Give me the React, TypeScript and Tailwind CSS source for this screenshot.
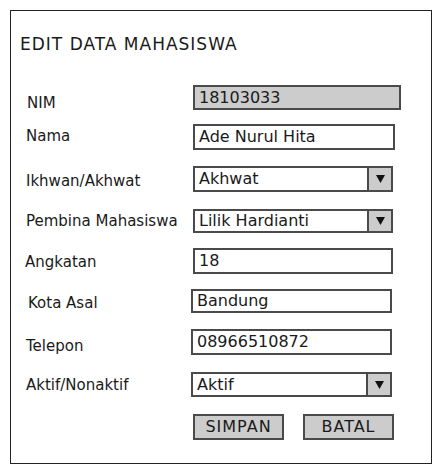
import React from "react";

type Row = {
  label: string;
  value: string;
  kind: "text" | "readonly" | "select";
  row: string; // margin-top + height
  labelBox: string; // width + padding to place the label
  input: string; // width of the field
};

const rows: Row[] = [
  { label: "NIM", value: "18103033", kind: "readonly", row: "mt-[31px] h-[25px]", labelBox: "w-[182px] pl-[16px] pt-[9px]", input: "w-[208px]" },
  { label: "Nama", value: "Ade Nurul Hita", kind: "text", row: "mt-[14px] h-[26px]", labelBox: "w-[182px] pl-[15px] pt-[3px]", input: "w-[202px]" },
  { label: "Ikhwan/Akhwat", value: "Akhwat", kind: "select", row: "mt-[16px] h-[26px]", labelBox: "w-[182px] pl-[15px] pt-[6px]", input: "w-[200px]" },
  { label: "Pembina Mahasiswa", value: "Lilik Hardianti", kind: "select", row: "mt-[17px] h-[24px]", labelBox: "w-[182px] pl-[15px] pt-[3px]", input: "w-[200px]" },
  { label: "Angkatan", value: "18", kind: "text", row: "mt-[15px] h-[26px]", labelBox: "w-[182px] pl-[14px] pt-[5px]", input: "w-[200px]" },
  { label: "Kota Asal", value: "Bandung", kind: "text", row: "mt-[15px] h-[24px]", labelBox: "w-[180px] pl-[17px] pt-[5px]", input: "w-[201px]" },
  { label: "Telepon", value: "08966510872", kind: "text", row: "mt-[16px] h-[26px]", labelBox: "w-[180px] pl-[15px] pt-[8px]", input: "w-[201px]" },
  { label: "Aktif/Nonaktif", value: "Aktif", kind: "select", row: "mt-[17px] h-[25px]", labelBox: "w-[180px] pl-[15px] pt-[4px]", input: "w-[201px]" },
];

function Field({ r }: { r: Row }) {
  const bg = r.kind === "readonly" ? "bg-[#cccccc]" : "bg-white";
  return (
    <div className={`flex ${r.row}`}>
      <div className={`shrink-0 text-[15px] leading-[18px] text-[#1a1a1a] ${r.labelBox}`}>{r.label}</div>
      <div className={`flex h-full border-2 border-[#4a4a4a] ${bg} ${r.input}`}>
        <div className="flex flex-1 items-center pl-[4px] text-[16px] leading-[20px] text-[#1a1a1a]">{r.value}</div>
        {r.kind === "select" && (
          <div className="flex w-[24px] items-center justify-center border-l-2 border-[#4a4a4a] bg-[#cccccc]">
            <svg width="9" height="8" viewBox="0 0 9 8">
              <path d="M0 0 H9 L4.5 8 Z" fill="#111" />
            </svg>
          </div>
        )}
      </div>
    </div>
  );
}

export default function App() {
  return (
    <div className="h-[472px] w-[444px] bg-white pl-[10px] pt-[10px]" style={{ fontFamily: '"DejaVu Sans", sans-serif' }}>
      <div className="h-[454px] w-[422px] border border-[#222]">
        <div className="ml-[9px] mt-[23px] text-[17px] leading-[20px] tracking-[1px] text-[#1a1a1a]">EDIT DATA MAHASISWA</div>
        {rows.map((r) => (
          <Field key={r.label} r={r} />
        ))}
        <div className="ml-[182px] mt-[17px] flex h-[26px] gap-[19px]">
          <button type="button" className="h-full w-[91px] border-2 border-[#4a4a4a] bg-[#cccccc] text-[16px] leading-[20px] tracking-[1px] text-[#1a1a1a]">
            SIMPAN
          </button>
          <button type="button" className="h-full w-[91px] border-2 border-[#4a4a4a] bg-[#cccccc] text-[16px] leading-[20px] tracking-[1px] text-[#1a1a1a]">
            BATAL
          </button>
        </div>
      </div>
    </div>
  );
}
